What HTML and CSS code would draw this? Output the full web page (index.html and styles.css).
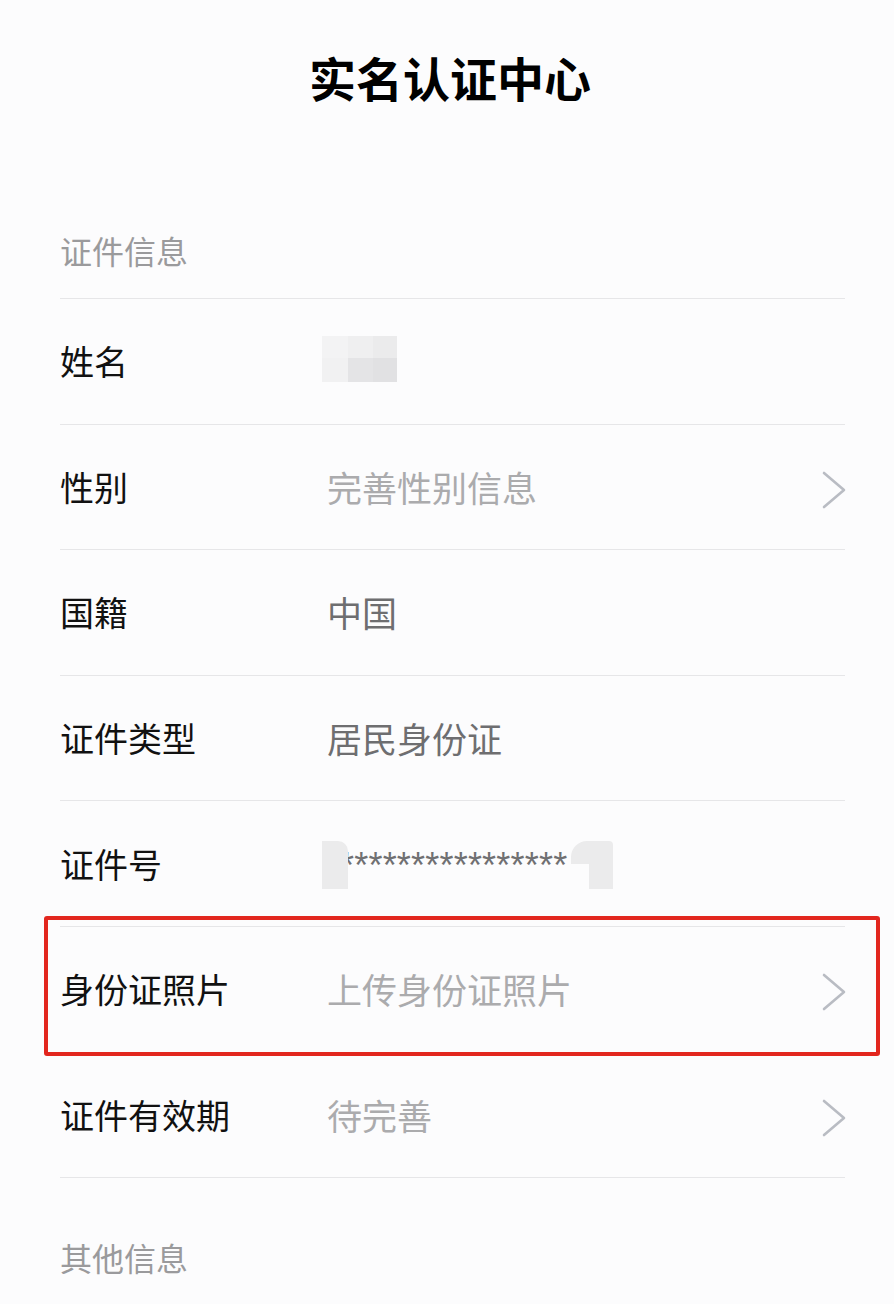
FILE: index.html
```html
<!DOCTYPE html>
<html lang="zh-CN">
<head>
<meta charset="utf-8">
<title>实名认证中心</title>
<link rel="stylesheet" href="styles.css">
</head>
<body>
<div class="page">
  <header class="header"><h1 class="title">实名认证中心</h1></header>

  <section class="section">
    <div class="section-title first">证件信息</div>
    <div class="list">
      <div class="row">
        <div class="label">姓名</div>
        <div class="value">
          <div class="mosaic">
            <span class="m m1"></span><span class="m m2"></span><span class="m m3"></span>
            <span class="m m4"></span><span class="m m5"></span><span class="m m6"></span>
          </div>
        </div>
      </div>
      <div class="row">
        <div class="label">性别</div>
        <div class="value placeholder">完善性别信息</div>
        <svg class="chev" viewBox="0 0 24 38" width="24" height="38"><polyline points="2,2 22,19 2,36" fill="none" stroke="#b9bcc3" stroke-width="2.6" stroke-linecap="round" stroke-linejoin="round"/></svg>
      </div>
      <div class="row">
        <div class="label">国籍</div>
        <div class="value filled">中国</div>
      </div>
      <div class="row">
        <div class="label">证件类型</div>
        <div class="value filled">居民身份证</div>
      </div>
      <div class="row">
        <div class="label">证件号</div>
        <div class="value">
          <div class="idnum">
            <span class="blob-left"></span>
            <span class="stars">****************</span>
            <span class="blob-right"><span class="br-top"></span><span class="br-bottom"></span></span>
          </div>
        </div>
      </div>
      <div class="row highlighted">
        <div class="label">身份证照片</div>
        <div class="value placeholder">上传身份证照片</div>
        <svg class="chev" viewBox="0 0 24 38" width="24" height="38"><polyline points="2,2 22,19 2,36" fill="none" stroke="#b9bcc3" stroke-width="2.6" stroke-linecap="round" stroke-linejoin="round"/></svg>
        <div class="redbox"></div>
      </div>
      <div class="row">
        <div class="label">证件有效期</div>
        <div class="value placeholder">待完善</div>
        <svg class="chev" viewBox="0 0 24 38" width="24" height="38"><polyline points="2,2 22,19 2,36" fill="none" stroke="#b9bcc3" stroke-width="2.6" stroke-linecap="round" stroke-linejoin="round"/></svg>
      </div>
    </div>
    <div class="section-title second">其他信息</div>
  </section>
</div>
</body>
</html>
```

FILE: styles.css
```css
html, body {
  margin: 0;
  padding: 0;
  background: #fcfcfd;
}

body {
  font-family: "Noto Sans CJK SC", "Noto Sans", sans-serif;
  color: #111;
}

.page {
  width: 894px;
  height: 1304px;
  overflow: hidden;
}

.header {
  height: 152px;
  display: flex;
  align-items: center;
  justify-content: center;
  padding-left: 6px;
}

.title {
  margin: 0;
  font-size: 47px;
  line-height: 47px;
  font-weight: 700;
  color: #000;
}

.section {
  margin: 0 49px 0 60px;
}

.section-title {
  font-size: 32px;
  line-height: 34px;
  color: #9a9a9c;
}

.section-title.first {
  padding-top: 81px;
  padding-bottom: 31px;
  border-bottom: 1px solid #e6e6e8;
}

.section-title.second {
  padding-top: 62px;
}

.list {
  display: flex;
  flex-direction: column;
}

.row {
  height: 124.6px;
  border-bottom: 1px solid #e6e6e8;
  display: flex;
  align-items: center;
  position: relative;
}

.label {
  width: 267px;
  flex: none;
  font-size: 34px;
  line-height: 40px;
  color: #111;
}

.value {
  flex: 1;
  font-size: 35px;
  line-height: 40px;
  display: flex;
  align-items: center;
}

.value.placeholder {
  color: #ababad;
}

.value.filled {
  color: #6e6e70;
}

.chev {
  flex: none;
  margin-right: -1px;
  margin-top: 6px;
}

/* name mosaic */
.mosaic {
  margin-left: -5px;
  margin-top: -4px;
  display: grid;
  grid-template-columns: 26px 25px 24px;
  grid-template-rows: 22px 24px;
}

.m1 { background: #f3f3f4; }
.m2 { background: #efeff0; }
.m3 { background: #ebebec; }
.m4 { background: #f1f1f2; }
.m5 { background: #e4e4e6; }
.m6 { background: #e1e1e3; }

/* id number */
.idnum {
  margin-left: -5px;
  margin-top: 2px;
  display: flex;
  align-items: flex-start;
  height: 48px;
}

.blob-left {
  display: block;
  width: 26px;
  height: 48px;
  background: #ebebec;
  border-top-right-radius: 10px;
  position: relative;
  z-index: 1;
}

.stars {
  display: block;
  margin-left: -8px;
  font-family: "Liberation Sans", Arial, sans-serif;
  font-size: 36px;
  line-height: 48px;
  letter-spacing: 0.2px;
  color: #707072;
  margin-top: 1px;
}

.blob-right {
  display: flex;
  flex-direction: column;
  align-items: flex-end;
  width: 42px;
  height: 48px;
  margin-left: 4px;
  position: relative;
  z-index: 1;
}

.br-top {
  display: block;
  width: 42px;
  height: 23px;
  background: #ebebec;
  border-top-left-radius: 16px;
  border-top-right-radius: 4px;
}

.br-bottom {
  display: block;
  width: 24px;
  height: 25px;
  background: #ebebec;
}

/* red annotation box */
.redbox {
  position: absolute;
  top: -11px;
  bottom: -4px;
  left: -16px;
  right: -35px;
  border: 4px solid #e2261e;
  border-radius: 3px;
  pointer-events: none;
}
```
